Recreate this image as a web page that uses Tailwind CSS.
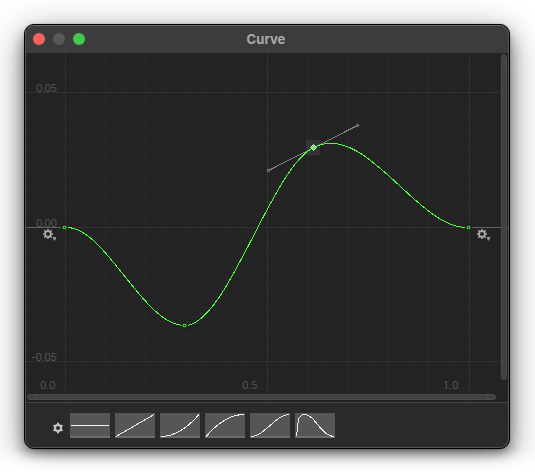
<!DOCTYPE html>
<html lang="en"><head><meta charset="utf-8"><title>Curve</title>
<script src="https://cdn.jsdelivr.net/npm/@tailwindcss/browser@4"></script></head>
<body class="relative w-[535px] h-[474px] overflow-hidden bg-white p-6 font-['Inter',sans-serif]">
<main class="w-[486px] h-[425px] rounded-[10px] border border-black bg-[#2a2a2a] shadow-[0_0_2px_rgba(0,0,0,0.25),0_8px_14px_rgba(0,0,0,0.4),0_10px_36px_rgba(0,0,0,0.48)]">
<div class="relative flex flex-col w-full h-full rounded-[9px] overflow-hidden">
<header class="h-7 shrink-0 bg-[#3c3c3c] grid grid-cols-[1fr_auto_1fr] items-center px-2">
<div class="flex gap-2"><i class="size-3 rounded-full bg-[#fc605c]"></i><i class="size-3 rounded-full bg-[#585858]"></i><i class="size-3 rounded-full bg-[#45c64e]"></i></div>
<h1 class="text-[13px] leading-4 font-bold text-[#aaaaaa] tracking-[0.05px] pr-[2px] mb-px">Curve</h1><span></span>
</header>
<svg class="block w-[484px] h-[349px] shrink-0 bg-[#232323]" viewBox="25 53 484 349" font-family="Inter, sans-serif" font-size="10.5" fill="#565656">
<g fill="none" shape-rendering="crispEdges">
<path stroke="#262626" d="M44.500 53V402M85.500 53V402M125.500 53V402M166.500 53V402M206.500 53V402M247.500 53V402M287.500 53V402M327.500 53V402M368.500 53V402M408.500 53V402M448.500 53V402M489.500 53V402M25 79.500H509M25 106.500H509M25 133.500H509M25 160.500H509M25 187.500H509M25 214.500H509M25 241.500H509M25 268.500H509M25 294.500H509M25 321.500H509M25 348.500H509M25 375.500H509"/>
<path stroke="#282828" d="M105.500 53V402M145.500 53V402M186.500 53V402M226.500 53V402M307.500 53V402M347.500 53V402M388.500 53V402M428.500 53V402M25 65.500H509M25 119.500H509M25 146.500H509M25 173.500H509M25 200.500H509M25 254.500H509M25 280.500H509M25 307.500H509M25 334.500H509M25 388.500H509"/>
<path stroke="#313131" d="M65.500 53V402M267.500 53V402M469.500 53V402M25 92.500H509M25 227.500H509M25 361.500H509"/>
</g>
<text x="36" y="92" textLength="21">0.05</text><text x="36" y="227" textLength="21">0.00</text><text x="31" y="361" textLength="26">-0.05</text>
<text x="40" y="389" textLength="15.500">0.0</text><text x="242" y="389" textLength="15.500">0.5</text><text x="443.500" y="389" textLength="15">1.0</text>
<g fill="none" shape-rendering="crispEdges">
<path stroke="#606060" d="M25 227.500H61M472 227.500H509"/>
<path fill="#ffffff" fill-opacity=".08" d="M306 140h14v15h-14z"/>
<path stroke="#828282" d="M268.500 170.500L357.500 125.500"/>
<path stroke="#4dff43" d="M68 227.600C106 229 144 325.500 184.500 325.500C227.500 325.500 270.500 169 313.500 147.500C365 121 416 226 465 227.500"/>
</g>
<g fill="#111" stroke="none"><path d="M61 227.500l3.500-3.500 3.500 3.500-3.500 3.500zM181 325.500l3.500-3.500 3.500 3.500-3.500 3.500zM465 227.500l3.500-3.500 3.500 3.500-3.500 3.500z"/></g>
<g fill="#182818" stroke="#4be044" stroke-width="1.200"><circle cx="64.500" cy="227.500" r="1.500"/><circle cx="184.500" cy="325.500" r="1.500"/><circle cx="468.500" cy="227.500" r="1.500"/></g>
<g fill="#484848" stroke="#858585"><circle cx="268.500" cy="170.500" r="1.300"/><circle cx="357.500" cy="125.500" r="1.300"/></g>
<path fill="#6fe96a" stroke="#c5f5c2" d="M310.500 147.500l3-3 3 3-3 3z"/>
<defs><g id="gear" fill="none" stroke="#b0b0b0"><circle r="2.900" stroke-width="1.700"/><path stroke-width="1.500" d="M0-3.500V-5M0 3.500V5M-3.500 0H-5M3.500 0H5M2.500-2.500L3.600-3.600M-2.500-2.500L-3.600-3.600M2.500 2.500L3.600 3.600M-2.500 2.500L-3.600 3.600"/></g></defs>
<use href="#gear" x="48" y="234"/><use href="#gear" x="482" y="234"/>
<path fill="#999" d="M52.500 237h4l-1.500 3.500h-1zM486.500 237h4l-1.500 3.500h-1z"/>
<g fill="#414141" stroke="#4b4b4b"><rect x="501.500" y="54.500" width="5" height="325" rx="2.500"/><path d="M501.500 62.500h5M501.500 371.500h5"/><rect x="27.500" y="394.500" width="468" height="5" rx="2.500"/><path d="M35.500 394.500v5M487.500 394.500v5"/></g>
</svg>
<footer class="flex-1 border-t border-[#454545] bg-[#2a2a2a] flex items-start pt-[10px] pl-[27px]">
<svg class="w-3 h-3 mt-[9px] mr-[6px]" viewBox="-6 -6 12 12" fill="none" stroke="#c8c8c8"><circle r="3" stroke-width="2"/><path stroke-width="2" d="M0-3.500V-5.200M0 3.500V5.200M3-1.750L4.500-2.600M-3-1.750L-4.500-2.600M3 1.750L4.500 2.600M-3 1.750L-4.500 2.600"/></svg>
<div class="flex gap-[5px]">
<svg class="w-10 h-[25px] bg-[#565656]" viewBox="0 0 40 25" fill="none" stroke="#eee" shape-rendering="crispEdges"><path stroke="#6c6c6c" stroke-width="2" d="M0 24H40"/><path d="M1 12.500H39"/></svg>
<svg class="w-10 h-[25px] bg-[#565656]" viewBox="0 0 40 25" fill="none" stroke="#eee" shape-rendering="crispEdges"><path stroke="#6c6c6c" stroke-width="2" d="M0 24H40"/><path d="M1 23.500L39 1.500"/></svg>
<svg class="w-10 h-[25px] bg-[#565656]" viewBox="0 0 40 25" fill="none" stroke="#eee" shape-rendering="crispEdges"><path stroke="#6c6c6c" stroke-width="2" d="M0 24H40"/><path d="M1 23.500C14 23.500 26 16.500 39 1.500"/></svg>
<svg class="w-10 h-[25px] bg-[#565656]" viewBox="0 0 40 25" fill="none" stroke="#eee" shape-rendering="crispEdges"><path stroke="#6c6c6c" stroke-width="2" d="M0 24H40"/><path d="M1 23.500C14 8.500 26 1.500 39 1.500"/></svg>
<svg class="w-10 h-[25px] bg-[#565656]" viewBox="0 0 40 25" fill="none" stroke="#eee" shape-rendering="crispEdges"><path stroke="#6c6c6c" stroke-width="2" d="M0 24H40"/><path d="M1 23.500C14 23.500 26 1.500 39 1.500"/></svg>
<svg class="w-10 h-[25px] bg-[#565656]" viewBox="0 0 40 25" fill="none" stroke="#eee" shape-rendering="crispEdges"><path stroke="#6c6c6c" stroke-width="2" d="M0 24H40"/><path d="M1.500 23.500L3.500 6C5 3 7 1.500 9.500 1.500C20 1.500 26 23 39 23.500"/></svg>
</div></footer>
<div class="absolute inset-0 rounded-[9px] border border-[#555] border-t-[#6a6a6a] pointer-events-none"></div>
</div></main>
<div class="absolute inset-x-0 bottom-0 h-[25px] bg-linear-to-b from-white/0 via-white/80 via-60% to-white pointer-events-none"></div>
</body></html>
